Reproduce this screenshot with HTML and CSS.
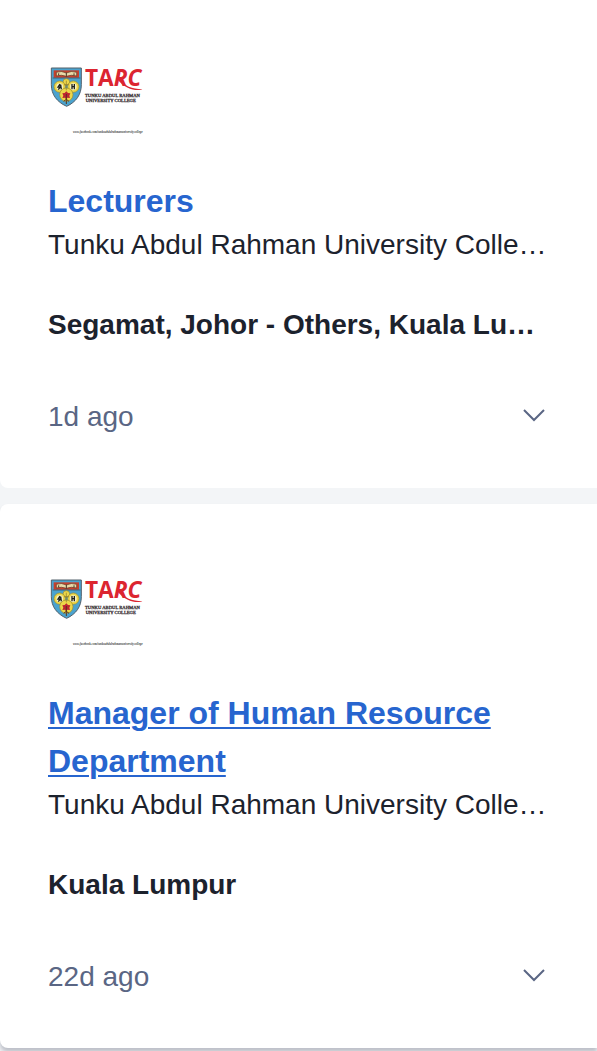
FILE: index.html
```
<!DOCTYPE html>
<html lang="en">
<head>
<meta charset="utf-8">
<meta name="viewport" content="width=device-width, initial-scale=1">
<title>Jobs</title>
<link rel="stylesheet" href="styles.css">
</head>
<body>
<main class="jobs">
  <article class="card">
    <svg class="logo" viewBox="0 0 288 288" role="img" aria-label="TARC">
      <path d="M10 84H100V134C100 164 84 186 56 199C27 186 10 164 10 134Z" fill="#4aa3cf" stroke="#53616b" stroke-width="3"/>
      <path d="M17 91H93V113H17Z" fill="#c6412d"/>
      <path d="M25 97Q40 91 55 99Q70 91 86 97V108Q70 103 55 109Q40 103 25 108Z" fill="#e9d9a8" stroke="#5b3a26" stroke-width="2"/>
      <path d="M55 98V110M32 100V106M78 100V106" stroke="#4a3324" stroke-width="3"/>
      <path d="M14 114H97" stroke="#39474d" stroke-width="2"/>
      <g fill="#ecd649" stroke="#9c8b2d" stroke-width="2">
        <circle cx="55" cy="126" r="10"/><circle cx="35" cy="140" r="17"/><circle cx="76" cy="140" r="17"/><circle cx="55" cy="164" r="20"/>
      </g>
      <circle cx="35" cy="140" r="10" fill="#f7f3c9"/><circle cx="76" cy="140" r="10" fill="#f7f3c9"/>
      <path d="M36 132L30 141H37L31 149M38 134L40 148M72 132V148M79 132V148M71 140H80" fill="none" stroke="#1f211a" stroke-width="4"/>
      <path d="M55 122V151M48 134H63" stroke="#8c792b" stroke-width="2"/>
      <path d="M55 154L60 159L67 160L64 167L66 174L58 173L55 179L51 173L43 174L46 167L43 160L50 159Z" fill="#bd2430"/>
      <path d="M55 162V192M47 184L55 178L63 184" fill="none" stroke="#57351f" stroke-width="3"/>
      <text class="mark" x="111" y="137">TA<tspan font-style="italic">RC</tspan></text>
      <path d="M216 113C228 139 252 147 283 147C270 155 231 149 207 116Z" fill="#dc2530"/>
      <text class="mark-name" x="111" y="170">TUNKU ABDUL RAHMAN</text>
      <text class="mark-name" x="113" y="185">UNIVERSITY COLLEGE</text>
      <text class="mark-url" x="75" y="279">www.facebook.com/tunkuabdulrahmanuniversitycollege</text>
    </svg>
    <h2 class="title"><a class="title-link" href="#lecturers">Lecturers</a></h2>
    <p class="company">Tunku Abdul Rahman University Colle…</p>
    <p class="location">Segamat, Johor - Others, Kuala Lu…</p>
    <div class="footer">
      <time class="age">1d ago</time>
      <button class="toggle" type="button" aria-label="Show more"><svg class="chevron" viewBox="0 0 24 16"><path d="M2 3L12 13L22 3"/></svg></button>
    </div>
  </article>
  <article class="card">
    <svg class="logo" viewBox="0 0 288 288" role="img" aria-label="TARC">
      <path d="M10 84H100V134C100 164 84 186 56 199C27 186 10 164 10 134Z" fill="#4aa3cf" stroke="#53616b" stroke-width="3"/>
      <path d="M17 91H93V113H17Z" fill="#c6412d"/>
      <path d="M25 97Q40 91 55 99Q70 91 86 97V108Q70 103 55 109Q40 103 25 108Z" fill="#e9d9a8" stroke="#5b3a26" stroke-width="2"/>
      <path d="M55 98V110M32 100V106M78 100V106" stroke="#4a3324" stroke-width="3"/>
      <path d="M14 114H97" stroke="#39474d" stroke-width="2"/>
      <g fill="#ecd649" stroke="#9c8b2d" stroke-width="2">
        <circle cx="55" cy="126" r="10"/><circle cx="35" cy="140" r="17"/><circle cx="76" cy="140" r="17"/><circle cx="55" cy="164" r="20"/>
      </g>
      <circle cx="35" cy="140" r="10" fill="#f7f3c9"/><circle cx="76" cy="140" r="10" fill="#f7f3c9"/>
      <path d="M36 132L30 141H37L31 149M38 134L40 148M72 132V148M79 132V148M71 140H80" fill="none" stroke="#1f211a" stroke-width="4"/>
      <path d="M55 122V151M48 134H63" stroke="#8c792b" stroke-width="2"/>
      <path d="M55 154L60 159L67 160L64 167L66 174L58 173L55 179L51 173L43 174L46 167L43 160L50 159Z" fill="#bd2430"/>
      <path d="M55 162V192M47 184L55 178L63 184" fill="none" stroke="#57351f" stroke-width="3"/>
      <text class="mark" x="111" y="137">TA<tspan font-style="italic">RC</tspan></text>
      <path d="M216 113C228 139 252 147 283 147C270 155 231 149 207 116Z" fill="#dc2530"/>
      <text class="mark-name" x="111" y="170">TUNKU ABDUL RAHMAN</text>
      <text class="mark-name" x="113" y="185">UNIVERSITY COLLEGE</text>
      <text class="mark-url" x="75" y="279">www.facebook.com/tunkuabdulrahmanuniversitycollege</text>
    </svg>
    <h2 class="title"><a class="title-link underlined" href="#manager">Manager of Human Resource Department</a></h2>
    <p class="company">Tunku Abdul Rahman University Colle…</p>
    <p class="location">Kuala Lumpur</p>
    <div class="footer">
      <time class="age">22d ago</time>
      <button class="toggle" type="button" aria-label="Show more"><svg class="chevron" viewBox="0 0 24 16"><path d="M2 3L12 13L22 3"/></svg></button>
    </div>
  </article>
</main>
</body>
</html>
```
FILE: styles.css
```
* { box-sizing: border-box; }
body {
  min-height: 100vh;
  margin: 0;
  background: #f3f5f7;
  color: #1c222d;
  font-family: "Liberation Sans", Arial, sans-serif;
  font-size: 28px;
  line-height: 40px;
}
.jobs {
  display: flex;
  flex-direction: column;
  gap: 16px;
}
.card {
  padding: 48px 48px 51px;
  background: #fff;
  border-radius: 8px 0 0 8px;
}
.card:first-child {
  padding-top: 40px;
  border-radius: 0 0 0 8px;
}
.card:last-child { box-shadow: 0 4px 4px #1c1f3a40; }
.logo {
  display: block;
  width: 96px;
  height: 96px;
  margin-bottom: 41px;
}
.mark {
  font: 700 68px "Open Sans", sans-serif;
  fill: #dc2530;
}
.mark-name {
  font: 400 14px "Liberation Serif", serif;
  fill: #3c3436;
  stroke: #3c3436;
  stroke-width: 1px;
}
.mark-url {
  font: italic 700 9px "Liberation Serif", serif;
  fill: #444;
}
.title {
  margin: 0;
  font-size: 32px;
  line-height: 48px;
}
.title-link {
  color: #2765cf;
  text-decoration: none;
}
.underlined {
  text-decoration: underline;
  text-decoration-thickness: 2px;
  text-underline-offset: 3px;
}
.company, .location {
  margin: 0;
  overflow: hidden;
  white-space: nowrap;
  text-overflow: ellipsis;
}
.location {
  margin-top: 40px;
  font-weight: 700;
}
.footer {
  display: flex;
  align-items: center;
  justify-content: space-between;
  margin-top: 52px;
}
.age { color: #5a6684; }
.toggle {
  display: flex;
  padding: 0 3px 4px 0;
  border: 0;
  background: none;
}
.chevron {
  width: 24px;
  height: 16px;
  fill: none;
  stroke: #5a6684;
  stroke-width: 2;
}
```
